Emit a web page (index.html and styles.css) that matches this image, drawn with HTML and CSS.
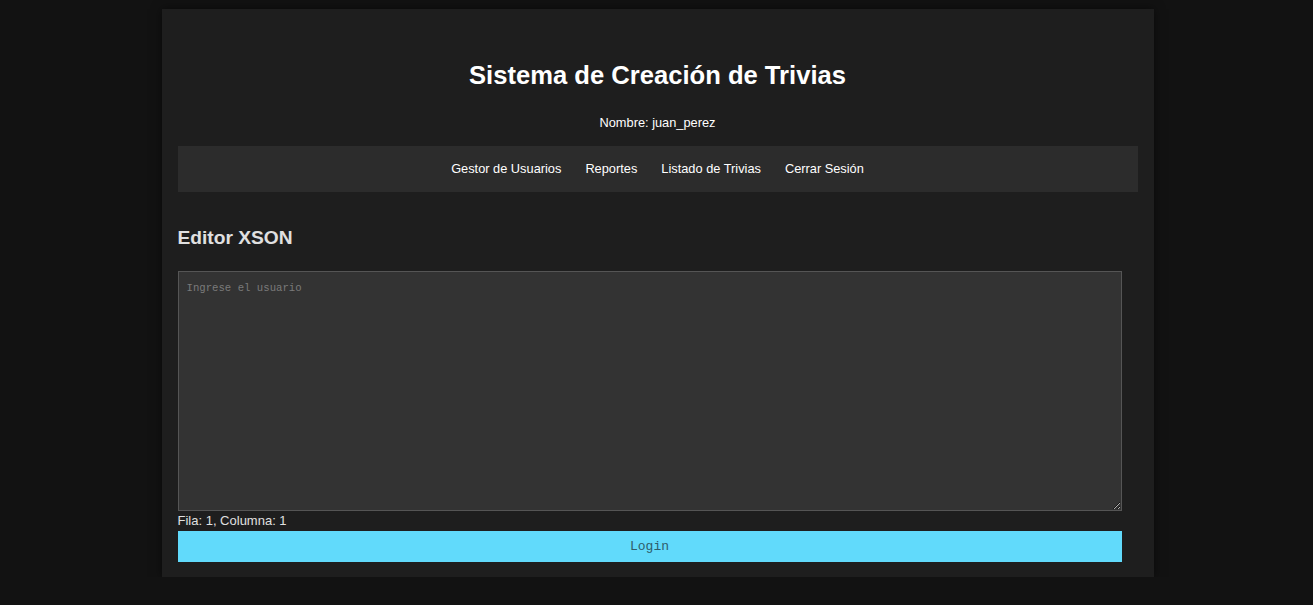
FILE: index.html
```html
<!DOCTYPE html>
<html lang="es">
<head>
<meta charset="utf-8">
<title>Editor XSON</title>
<link rel="stylesheet" href="styles.css">
</head>
<body>
<div class="container">
  <header class="header">
    <h1 class="title">Sistema de Creación de Trivias</h1>
    <p class="user">Nombre: juan_perez</p>
  </header>
  <nav class="nav">
    <a href="#" class="nav-link">Gestor de Usuarios</a>
    <a href="#" class="nav-link">Reportes</a>
    <a href="#" class="nav-link">Listado de Trivias</a>
    <a href="#" class="nav-link">Cerrar Sesión</a>
  </nav>
  <main class="main">
    <h2 class="section-title">Editor XSON</h2>
    <textarea class="editor" placeholder="Ingrese el usuario"></textarea>
    <div class="status">Fila: 1, Columna: 1</div>
    <button class="btn">Login</button>
  </main>
</div>
</body>
</html>
```
FILE: styles.css
```css
* { box-sizing: border-box; }
html, body { margin: 0; padding: 0; }
body {
  background: #121212;
  color: #e0e0e0;
  font-family: "Liberation Sans", Arial, sans-serif;
  padding: 9px 0 0 2px;
}
.container {
  width: 992px;
  margin: 0 auto;
  background: #1e1e1e;
  padding: 16px 16px 15px;
  box-shadow: 0 0 10px rgba(0,0,0,0.5);
}
.header {
  text-align: center;
  padding-top: 36px;
}
.title {
  margin: 0;
  font-size: 25.6px;
  line-height: 28px;
  font-weight: bold;
  color: #ffffff;
}
.user {
  margin: 26px 0 0;
  font-size: 12.8px;
  line-height: 15px;
  color: #ffffff;
}
.nav {
  margin-top: 16px;
  background: #2c2c2c;
  height: 46px;
  display: flex;
  justify-content: center;
  align-items: center;
  gap: 24px;
  padding-bottom: 1px;
}
.nav-link {
  color: #ffffff;
  text-decoration: none;
  font-size: 12.8px;
}
.main {
  padding-top: 34px;
}
.section-title {
  margin: 0;
  font-size: 19.2px;
  line-height: 24px;
  font-weight: bold;
  color: #e0e0e0;
}
.editor {
  display: block;
  margin-top: 21px;
  width: 944px;
  height: 240px;
  background: #333333;
  border: 1px solid #555555;
  color: #e0e0e0;
  padding: 10px 8px 8px;
  font-family: "Liberation Mono", "Courier New", monospace;
  font-size: 10.67px;
  resize: vertical;
}
.editor::placeholder { color: #7a7a7a; }
.status {
  font-size: 13px;
  line-height: 20px;
  color: #e0e0e0;
}
.btn {
  display: block;
  width: 944px;
  height: 31px;
  border: none;
  background: #61dafb;
  color: #2f5d6b;
  font-family: "Liberation Mono", "Courier New", monospace;
  font-size: 13px;
  cursor: pointer;
}
```
